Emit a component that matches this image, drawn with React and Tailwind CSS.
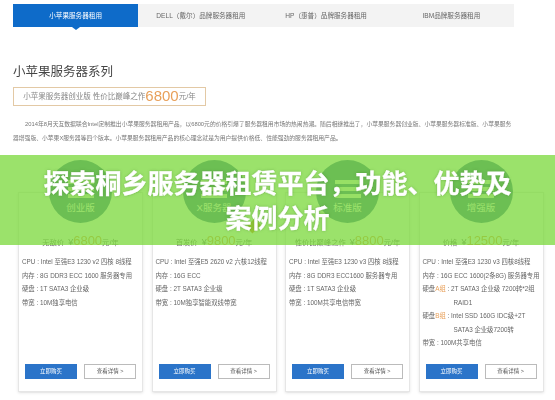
const tabs = ["小苹果服务器租用", "DELL（戴尔）品牌服务器租用", "HP（惠普）品牌服务器租用", "IBM品牌服务器租用"];

const plans = [
  {
    name: "创业版",
    priceLabel: "无敌价",
    price: "6800",
    specs: [
      { label: "CPU : ", value: "Intel 至强E3 1230 v2 四核 8线程" },
      { label: "内存 : ", value: "8G DDR3 ECC 1600 服务器专用" },
      { label: "硬盘 : ", value: "1T SATA3 企业级" },
      { label: "带宽 : ", value: "10M独享电信" },
    ],
  },
  {
    name: "X服务器",
    priceLabel: "首发价",
    price: "9800",
    badge: true,
    specs: [
      { label: "CPU : ", value: "Intel 至强E5 2620 v2 六核12线程" },
      { label: "内存 : ", value: "16G ECC" },
      { label: "硬盘 : ", value: "2T SATA3 企业级" },
      { label: "带宽 : ", value: "10M独享智能双线带宽" },
    ],
  },
  {
    name: "标准版",
    priceLabel: "性价比巅峰之作",
    price: "8800",
    specs: [
      { label: "CPU : ", value: "Intel 至强E3 1230 v3 四核 8线程" },
      { label: "内存 : ", value: "8G DDR3 ECC1600 服务器专用" },
      { label: "硬盘 : ", value: "1T SATA3 企业级" },
      { label: "带宽 : ", value: "100M共享电信带宽" },
    ],
  },
  {
    name: "增强版",
    priceLabel: "价格",
    price: "12500",
    specs: [
      { label: "CPU : ", value: "Intel 至强E3 1230 v3 四核8线程" },
      { label: "内存 : ", value: "16G ECC 1600(2条8G) 服务器专用" },
      { label: "硬盘", accent: "A组", after: " : ", value: "2T SATA3 企业级 7200转*2组", more: "RAID1" },
      { label: "硬盘", accent: "B组", after: " : ", value: "Intel SSD 160G IDC级+2T", more: "SATA3 企业级7200转" },
      { label: "带宽 : ", value: "100M共享电信" },
    ],
  },
];

const PlanCard = ({ plan }) => {
  return (
    <div className="relative w-[125px] flex flex-col items-center">
      <div className="relative z-10 w-[63px] h-[63px] -mb-[31px] rounded-full bg-[#46739f] flex flex-col items-center justify-end pb-[9px]">
        <div className="mb-[4px] w-[26px] space-y-[3px]">
          <div className="h-[4px] bg-[#eef7e8]"></div>
          <div className="h-[4px] bg-[#eef7e8]"></div>
          <div className="h-[4px] bg-[#eef7e8]"></div>
        </div>
        <span className="text-[9.5px] leading-[12px] text-white">{plan.name}</span>
      </div>
      {plan.badge && (
        <span className="absolute z-10 left-[97px] top-[60px] w-[9px] h-[12px] rotate-45 bg-[#d9902a]"></span>
      )}
      <div className="w-full h-[200px] border border-[#e6e6e6] shadow-sm bg-white flex flex-col px-[3px] pb-[12px]">
        <div className="mt-[41px] text-center text-[#777] text-[7.3px] leading-[14px] whitespace-nowrap">
          {plan.priceLabel}
          <span className="ml-[4px] text-[9px]">¥</span>
          <span className="text-[13px] text-[#e8a05a]">{plan.price}</span>元/年
        </div>
        <div className="mt-[5px] flex-1 text-[6.35px] leading-[13.5px] text-[#666] whitespace-nowrap">
          {plan.specs.map((spec) => (
            <div key={spec.value}>
              <div>
                {spec.label}
                {spec.accent && <span className="text-[#e8a05a]">{spec.accent}</span>}
                {spec.after}
                {spec.value}
              </div>
              {spec.more && <div className="pl-[31px]">{spec.more}</div>}
            </div>
          ))}
        </div>
        <div className="flex justify-between px-[3px]">
          <button className="w-[52px] h-[15px] bg-[#2b74c9] text-white text-[5.5px]">立即购买</button>
          <button className="w-[52px] h-[15px] border border-[#bbb] bg-white text-[#555] text-[5.5px]">查看详情 &gt;</button>
        </div>
      </div>
    </div>
  );
};

const App = () => {
  return (
    <div className="relative w-[555px] h-[400px] overflow-hidden bg-white font-['Liberation_Sans','Noto_Sans_CJK_SC',sans-serif]">
      <div className="blur-[0.4px]">
        <div className="mt-[4px] mx-[13px] w-[501px] h-[23px] flex bg-[#f3f3f3]">
          {tabs.map((tab, i) => (
            <div
              key={tab}
              className={
                i === 0
                  ? "relative flex-1 bg-[#0e6bc9] text-white text-[6.6px] flex items-center justify-center"
                  : "flex-1 text-[#666] text-[6.6px] flex items-center justify-center"
              }
            >
              {tab}
              {i === 0 && (
                <span className="absolute left-1/2 -translate-x-1/2 top-full border-x-[4px] border-t-[3px] border-x-transparent border-t-[#0e6bc9]"></span>
              )}
            </div>
          ))}
        </div>

        <h2 className="mt-[35px] ml-[13px] text-[12.5px] leading-[20px] text-[#444]">小苹果服务器系列</h2>

        <div className="mt-[5px] ml-[13px] w-[193px] h-[19px] border border-[#e3c9a5] flex items-center justify-center text-[7.5px] text-[#888] whitespace-nowrap">
          小苹果服务器创业版 性价比巅峰之作<span className="text-[15px] text-[#e8a05a]">6800</span>元/年
        </div>

        <p className="mt-[11px] mx-[13px] w-[500px] text-[5.8px] leading-[14px] text-[#777] indent-[12px]">
          2014年8月天互数据联合Intel定制推出小苹果服务器租用产品，以6800元的价格引爆了服务器租用市场的热闹热潮。随后相继推出了，小苹果服务器创业版、小苹果服务器标准版、小苹果服务器增强版、小苹果X服务器等四个版本。小苹果服务器租用产品的核心理念就是为用户提供价格低、性能强劲的服务器租用产品。
        </p>

        <div className="mt-[15px] ml-[18px] flex gap-[8.5px]">
          {plans.map((plan) => (
            <PlanCard key={plan.name} plan={plan} />
          ))}
        </div>
      </div>

      <div className="absolute top-[155px] left-0 w-full h-[90px] bg-[#7ad83a]/75 z-20 flex items-center justify-center pt-[3px]">
        <h1 className="w-[480px] text-center text-white font-bold text-[26px] leading-[35px] [-webkit-text-stroke:0.3px_white] [text-shadow:0_0_3px_rgba(60,120,40,0.5)]">
          探索桐乡服务器租赁平台，功能、优势及案例分析
        </h1>
      </div>
    </div>
  );
};

export default App;
